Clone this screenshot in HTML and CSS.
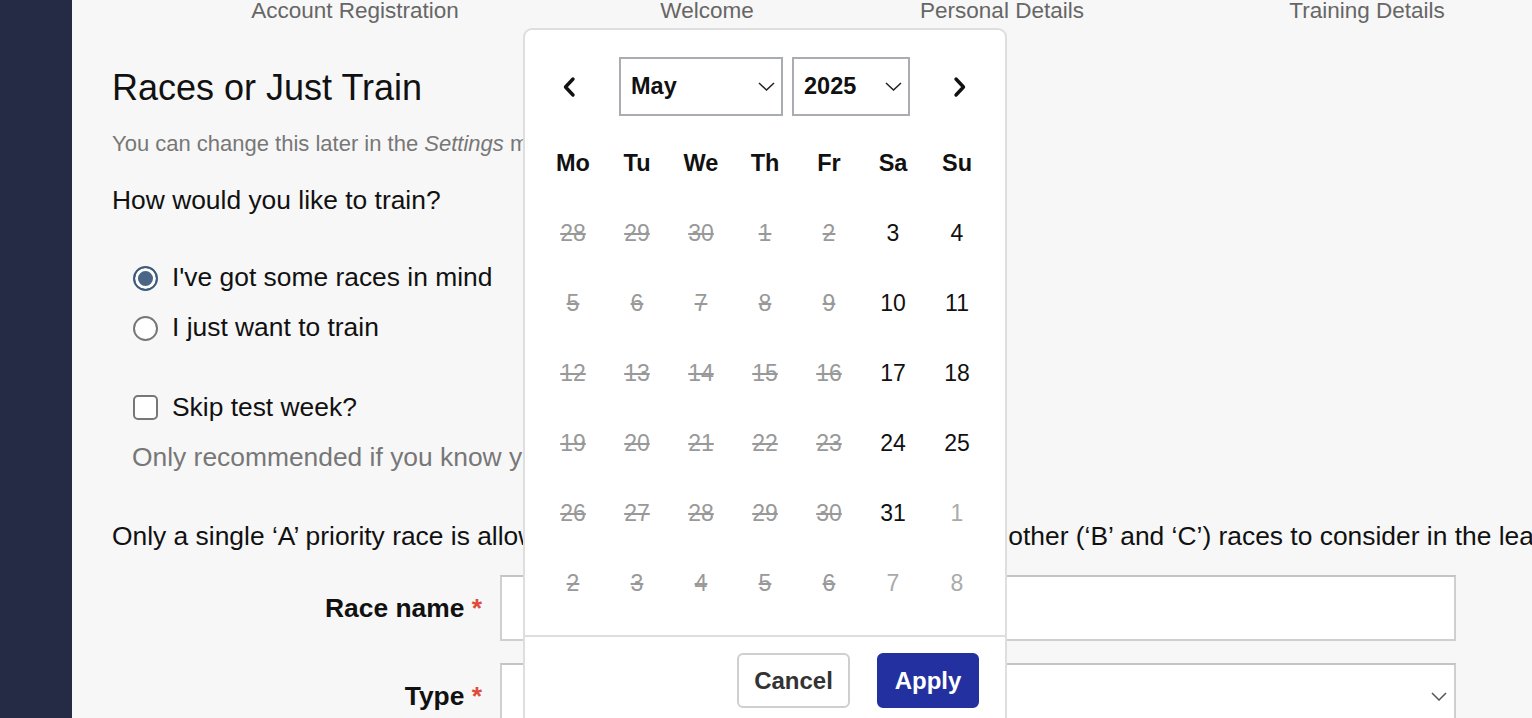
FILE: index.html
```html
<!DOCTYPE html>
<html lang="en">
<head>
<meta charset="utf-8">
<title>Races or Just Train</title>
<link rel="stylesheet" href="styles.css">
</head>
<body>
<aside class="sidebar"></aside>
<main class="main">
  <nav class="steps">
    <span class="step">Account Registration</span>
    <span class="step">Welcome</span>
    <span class="step">Personal Details</span>
    <span class="step">Training Details</span>
  </nav>
  <h1 class="title">Races or Just Train</h1>
  <p class="subtitle">You can change this later in the <em>Settings</em> menu.</p>
  <p class="question">How would you like to train?</p>
  <div class="radios">
    <label class="option"><span class="radio radio-on"></span>I've got some races in mind</label>
    <label class="option"><span class="radio"></span>I just want to train</label>
  </div>
  <label class="option check-row"><span class="checkbox"></span>Skip test week?</label>
  <p class="help">Only recommended if you know your current fitness levels.</p>
  <p class="para">Only a single ‘A’ priority race is allowed, but you can also add any number of other (‘B’ and ‘C’) races to consider in the lead-up.</p>
  <div class="form-row first">
    <span class="form-label">Race name <span class="req">*</span></span>
    <span class="input"></span>
  </div>
  <div class="form-row">
    <span class="form-label">Type <span class="req">*</span></span>
    <span class="input select">
      <svg class="sel-chev" width="16" height="9" viewBox="0 0 16 9"><path d="M1 1 L8 8 L15 1" fill="none" stroke="#555" stroke-width="1.5"/></svg>
    </span>
  </div>
</main>

<div class="picker">
  <div class="picker-head">
    <button class="nav-btn" aria-label="Previous month">
      <svg width="14" height="22" viewBox="0 0 14 22"><path d="M11 3 L3.5 11 L11 19" fill="none" stroke="#111" stroke-width="3.4" stroke-linecap="round" stroke-linejoin="round"/></svg>
    </button>
    <div class="picker-selects">
      <div class="psel psel-month">May<svg class="psel-chev" width="17" height="9" viewBox="0 0 17 9"><path d="M1 1 L8.5 8 L16 1" fill="none" stroke="#222" stroke-width="1.5"/></svg></div>
      <div class="psel psel-year">2025<svg class="psel-chev" width="17" height="9" viewBox="0 0 17 9"><path d="M1 1 L8.5 8 L16 1" fill="none" stroke="#222" stroke-width="1.5"/></svg></div>
    </div>
    <button class="nav-btn" aria-label="Next month">
      <svg width="14" height="22" viewBox="0 0 14 22"><path d="M3 3 L10.5 11 L3 19" fill="none" stroke="#111" stroke-width="3.4" stroke-linecap="round" stroke-linejoin="round"/></svg>
    </button>
  </div>
  <div class="cal">
    <span class="wd">Mo</span><span class="wd">Tu</span><span class="wd">We</span><span class="wd">Th</span><span class="wd">Fr</span><span class="wd">Sa</span><span class="wd">Su</span>

    <span class="d off">28</span><span class="d off">29</span><span class="d off">30</span><span class="d off">1</span><span class="d off">2</span><span class="d">3</span><span class="d">4</span>
    <span class="d off">5</span><span class="d off">6</span><span class="d off">7</span><span class="d off">8</span><span class="d off">9</span><span class="d">10</span><span class="d">11</span>
    <span class="d off">12</span><span class="d off">13</span><span class="d off">14</span><span class="d off">15</span><span class="d off">16</span><span class="d">17</span><span class="d">18</span>
    <span class="d off">19</span><span class="d off">20</span><span class="d off">21</span><span class="d off">22</span><span class="d off">23</span><span class="d">24</span><span class="d">25</span>
    <span class="d off">26</span><span class="d off">27</span><span class="d off">28</span><span class="d off">29</span><span class="d off">30</span><span class="d">31</span><span class="d out">1</span>
    <span class="d off">2</span><span class="d off">3</span><span class="d off">4</span><span class="d off">5</span><span class="d off">6</span><span class="d out">7</span><span class="d out">8</span>
  </div>
  <div class="picker-foot">
    <button class="btn btn-cancel">Cancel</button>
    <button class="btn btn-apply">Apply</button>
  </div>
</div>
</body>
</html>
```

FILE: styles.css
```css
* { box-sizing: border-box; }

html, body {
  margin: 0;
  height: 100%;
  overflow: hidden;
}

body {
  display: flex;
  font-family: "Liberation Sans", Arial, Helvetica, sans-serif;
  color: #111;
  background: #f7f7f7;
  position: relative;
}

.sidebar {
  width: 72px;
  flex: 0 0 72px;
  background: #252a45;
}

.main {
  flex: 1;
  min-width: 0;
  background: #f7f7f7;
  padding-left: 40px;
}

.steps {
  display: grid;
  grid-template-columns: 486px 218px 372px 358px;
  font-size: 22.5px;
  line-height: 22px;
  color: #666;
  white-space: nowrap;
}

.step { text-align: center; }

.title {
  margin: 46px 0 0;
  font-size: 36px;
  line-height: 40px;
  font-weight: 400;
  color: #111;
}

.subtitle {
  margin: 22px 0 0;
  font-size: 22px;
  line-height: 28px;
  color: #777;
  white-space: nowrap;
}

.question {
  margin: 27px 0 0;
  font-size: 26.4px;
  line-height: 30px;
}

.radios {
  margin-top: 47px;
  display: flex;
  flex-direction: column;
  gap: 20px;
}

.option {
  display: flex;
  align-items: center;
  gap: 14px;
  padding-left: 21px;
  font-size: 26.4px;
  line-height: 30px;
  white-space: nowrap;
}

.radio {
  width: 25px;
  height: 25px;
  border-radius: 50%;
  border: 2px solid #777;
  background: #fff;
  flex: 0 0 25px;
  margin-top: 3px;
}

.radio-on {
  border-color: #3e5b7d;
  background: #4a6585;
  box-shadow: inset 0 0 0 3px #fff;
}

.check-row { margin-top: 50px; }

.checkbox {
  width: 25px;
  height: 25px;
  flex: 0 0 25px;
  border: 2px solid #777;
  border-radius: 5px;
  background: #fff;
}

.help {
  margin: 20px 0 0;
  padding-left: 20px;
  font-size: 26.4px;
  line-height: 30px;
  color: #777;
  white-space: nowrap;
}

.para {
  margin: 49px 0 0;
  font-size: 26.4px;
  line-height: 30px;
  white-space: nowrap;
}

.form-row {
  display: grid;
  grid-template-columns: 370px 956px;
  column-gap: 18px;
  align-items: center;
  margin-top: 22px;
}

.form-row.first { margin-top: 24px; }

.form-label {
  text-align: right;
  font-size: 26.4px;
  font-weight: 700;
  line-height: 30px;
}

.req { color: #e04a3b; }

.input {
  display: flex;
  align-items: center;
  justify-content: flex-end;
  height: 66px;
  background: #fff;
  border: 2px solid #cfcfcf;
  border-top-color: #c4c4c4;
  padding-right: 7px;
}

.picker {
  position: absolute;
  left: 523px;
  top: 28px;
  width: 484px;
  height: 740px;
  background: #fff;
  border: 2px solid #dedede;
  border-radius: 9px;
}

.picker-head {
  display: flex;
  align-items: center;
  justify-content: space-between;
  padding: 27px 25px 0 24px;
}

.nav-btn {
  width: 40px;
  height: 40px;
  padding: 0;
  border: 0;
  background: transparent;
  display: flex;
  align-items: center;
  justify-content: center;
}

.picker-selects {
  display: flex;
  gap: 9px;
}

.psel {
  height: 59px;
  border: 2px solid #a9adb2;
  display: flex;
  align-items: center;
  justify-content: space-between;
  font-size: 23.5px;
  font-weight: 700;
  color: #111;
}

.psel-month { width: 164px; padding: 0 6px 0 10px; }
.psel-year { width: 118px; padding: 0 6px 0 10px; }

.cal {
  display: grid;
  grid-template-columns: repeat(7, 64px);
  grid-auto-rows: 70px;
  margin: 12px 0 0 16px;
  padding-bottom: 17px;
}

.wd, .d {
  display: flex;
  align-items: center;
  justify-content: center;
  font-size: 23px;
}

.wd { font-weight: 700; font-size: 23.5px; }

.d { color: #111; }

.d.off {
  color: #999;
  text-decoration: line-through;
  text-decoration-color: #999;
  text-decoration-thickness: 2px;
}

.d.out { color: #aaa; }

.picker-foot {
  border-top: 2px solid #dedede;
  margin-left: -2px;
  margin-right: -2px;
  display: flex;
  justify-content: flex-end;
  gap: 27px;
  padding: 16px 28px 20px 0;
}

.btn {
  height: 55px;
  border-radius: 6px;
  font-family: "Liberation Sans", Arial, Helvetica, sans-serif;
  font-size: 24px;
  font-weight: 700;
  padding: 0;
}

.btn-cancel {
  width: 113px;
  background: #fff;
  border: 2px solid #cfcfcf;
  color: #333;
}

.btn-apply {
  width: 102px;
  background: #2331a0;
  border: 2px solid #2331a0;
  color: #fff;
}
```
